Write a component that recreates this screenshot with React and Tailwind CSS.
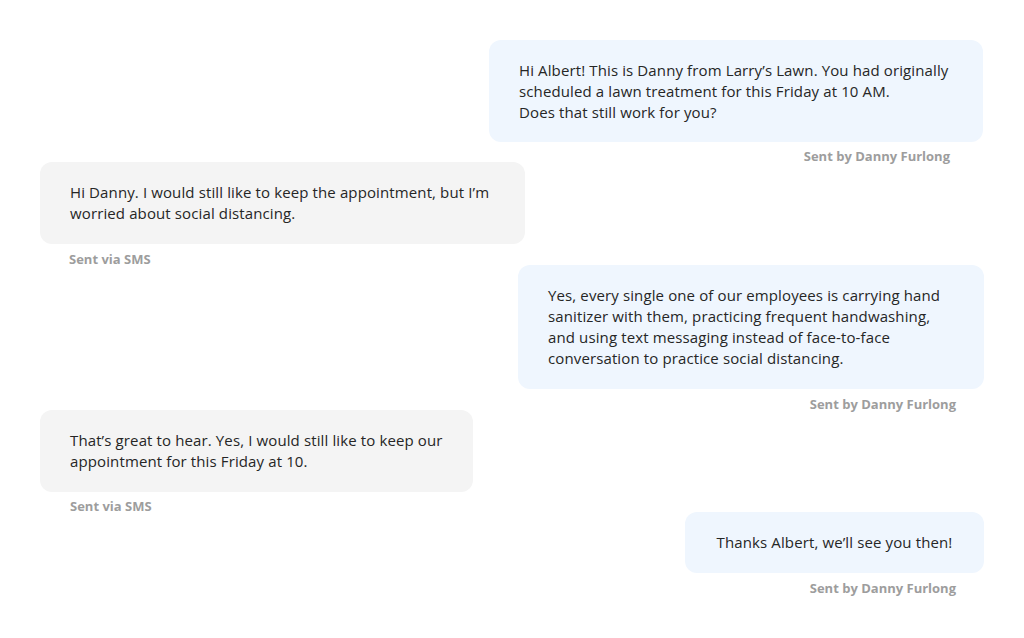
import React from 'react';

const messages = [
  {
    id: 1,
    out: true,
    width: 'w-[494px]',
    lines: [
      'Hi Albert! This is Danny from Larry’s Lawn. You had originally',
      'scheduled a lawn treatment for this Friday at 10 AM.',
      'Does that still work for you?',
    ],
    label: 'Sent by Danny Furlong',
    labelClass: 'mr-[34px] mt-[8px]',
    bubbleClass: 'mr-px pb-[19px]',
  },
  {
    id: 2,
    out: false,
    width: 'w-[485px]',
    lines: [
      'Hi Danny. I would still like to keep the appointment, but I’m',
      'worried about social distancing.',
    ],
    label: 'Sent via SMS',
    labelClass: 'ml-[29px] mt-[9px]',
  },
  {
    id: 3,
    out: true,
    width: 'w-[466px]',
    lines: [
      'Yes, every single one of our employees is carrying hand',
      'sanitizer with them, practicing frequent handwashing,',
      'and using text messaging instead of face-to-face',
      'conversation to practice social distancing.',
    ],
    label: 'Sent by Danny Furlong',
    labelClass: 'mr-[28px] mt-[9px]',
  },
  {
    id: 4,
    out: false,
    width: 'w-[433px]',
    lines: [
      'That’s great to hear. Yes, I would still like to keep our',
      'appointment for this Friday at 10.',
    ],
    label: 'Sent via SMS',
    labelClass: 'ml-[30px] mt-[8px]',
  },
  {
    id: 5,
    out: true,
    width: 'w-[299px]',
    lines: ['Thanks Albert, we’ll see you then!'],
    label: 'Sent by Danny Furlong',
    labelClass: 'mr-[28px] mt-[9px]',
    center: true,
  },
];

export default function App() {
  return (
    <div className="w-[1024px] h-[638px] bg-white px-10 pt-10 font-['Open_Sans',sans-serif] overflow-hidden">
      <div className="flex flex-col">
        {messages.map((m) => (
          <div key={m.id} className={`flex flex-col ${m.out ? 'items-end' : 'items-start'}`}>
            <div
              className={`${m.width} rounded-xl px-[30px] py-5 text-[15px] leading-[21px] tracking-[0.12px] text-[#262626] whitespace-nowrap ${
                m.out ? 'bg-[#eff6fe]' : 'bg-[#f4f4f4]'
              } ${m.center ? 'text-center' : ''} ${m.bubbleClass || ''}`}
            >
              {m.lines.map((l, i) => (
                <div key={i}>{l}</div>
              ))}
            </div>
            <div className={`text-[13px] leading-[12px] font-bold text-[#9d9d9d] ${m.labelClass}`}>
              {m.label}
            </div>
          </div>
        ))}
      </div>
    </div>
  );
}
